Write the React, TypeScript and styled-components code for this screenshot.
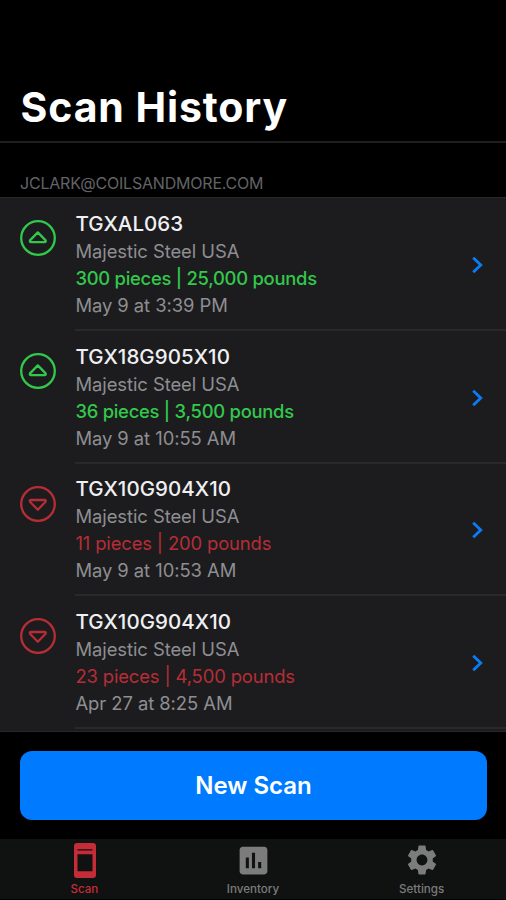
import React from "react";
import styled, { createGlobalStyle } from "styled-components";
import { MdAssessment, MdSettings } from "react-icons/md";

const GlobalStyle = createGlobalStyle`
  * { box-sizing: border-box; }
  body { margin: 0; background: #000; font-family: Inter, Roboto, sans-serif; }
`;

const GREEN = "#32c84c";
const RED = "#b72d36";

const Screen = styled.main`
  display: flex;
  flex-direction: column;
  width: 506px;
  height: 900px;
  overflow: hidden;
  background: #000;
`;

const Header = styled.header`
  flex: none;
  height: 143px;
  padding: 83px 0 0 20.5px;
  border-bottom: 2px solid #1f1f20;
`;

const Title = styled.h1`
  margin: 0;
  color: #fff;
  font-size: 41px;
  line-height: 48px;
  font-weight: 700;
  letter-spacing: 0.9px;
  white-space: nowrap;
`;

const Account = styled.h2`
  flex: none;
  height: 54px;
  margin: 0;
  padding: 30px 0 0 20px;
  color: #636366;
  font-size: 16px;
  line-height: 20px;
  font-weight: 400;
  letter-spacing: -0.2px;
`;

const List = styled.ul`
  flex: none;
  height: 535px;
  margin: 0;
  padding: 0;
  overflow: hidden;
  list-style: none;
  background: #1c1c1e;
  border-top: 1px solid #29292b;
  border-bottom: 1px solid #29292b;
`;

const Row = styled.li`
  display: flex;
  height: 132.75px;
  padding-left: 20px;
`;

const StatusIcon = styled.svg`
  flex: none;
  width: 36px;
  height: 36px;
  margin: 22px 19px 0 0;
  fill: none;
  stroke-linejoin: round;
`;

const Details = styled.div`
  display: flex;
  flex: 1;
  align-items: center;
  justify-content: space-between;
  padding: 2px 22px 0 0;
  border-bottom: 2px solid #29292b;
`;

const Lines = styled.div`
  padding-left: 0.4px;
`;

const Line = styled.p<{ $color?: string; $spacing?: string; $medium?: boolean }>`
  margin: 0;
  color: ${(p) => p.$color ?? "#8e8e92"};
  font-size: 18.4px;
  line-height: 27px;
  font-weight: ${(p) => (p.$medium ? 500 : 400)};
  letter-spacing: ${(p) => p.$spacing ?? "-0.05px"};
  white-space: nowrap;
`;

const Code = styled(Line)`
  color: #f0f0f2;
  font-size: 20.5px;
  line-height: 28px;
  letter-spacing: 0.05px;
`;

const Chevron = styled.svg`
  width: 13px;
  height: 18px;
  margin-top: 1px;
  fill: none;
  stroke: #0a7cf5;
  stroke-width: 2.8;
`;

const Action = styled.div`
  flex: none;
  height: 107px;
  padding: 19px 19px 19px 20px;
`;

const ScanButton = styled.button`
  display: block;
  width: 100%;
  height: 69px;
  padding: 0;
  border: 0;
  border-radius: 12px;
  background: #007aff;
  color: #fff;
  font: 600 24px/69px Inter, sans-serif;
`;

const TabBar = styled.nav`
  display: grid;
  flex: 1;
  grid-template-columns: repeat(3, 1fr);
  background: #101111;
  border-bottom: 1px solid #000;
`;

const Tab = styled.a<{ $active?: boolean }>`
  display: flex;
  flex-direction: column;
  align-items: center;
  color: ${(p) => (p.$active ? "#c42d38" : "#7c7c7c")};
`;

const TabIcon = styled.span`
  display: flex;
  align-items: center;
  justify-content: center;
  height: 42px;
  padding-left: 1px;
`;

const TabLabel = styled.span`
  font-size: 11.6px;
  line-height: 16px;
  font-weight: 500;
`;

type Scan = { code: string; amount: string; time: string; incoming: boolean };

const scans: Scan[] = [
  { code: "TGXAL063", amount: "300 pieces | 25,000 pounds", time: "May 9 at 3:39 PM", incoming: true },
  { code: "TGX18G905X10", amount: "36 pieces | 3,500 pounds", time: "May 9 at 10:55 AM", incoming: true },
  { code: "TGX10G904X10", amount: "11 pieces | 200 pounds", time: "May 9 at 10:53 AM", incoming: false },
  { code: "TGX10G904X10", amount: "23 pieces | 4,500 pounds", time: "Apr 27 at 8:25 AM", incoming: false },
];

function ScanRow({ code, amount, time, incoming }: Scan) {
  const color = incoming ? GREEN : RED;
  return (
    <Row>
      <StatusIcon viewBox="0 0 36 36" stroke={color} strokeWidth="2.3">
        <circle cx="18" cy="18" r="16.8" />
        <path d={incoming ? "M17.8 12.4 25.6 20.4Q26.2 22.1 24.6 22.1H11Q9.4 22.1 10 20.4Z" : "M17.8 23.7 25.6 15.7Q26.2 14 24.6 14H11Q9.4 14 10 15.7Z"} />
      </StatusIcon>
      <Details>
        <Lines>
          <Code $medium>{code}</Code>
          <Line>Majestic Steel USA</Line>
          <Line $color={color} $medium={incoming} $spacing={incoming ? "-0.26px" : "-0.12px"}>{amount}</Line>
          <Line>{time}</Line>
        </Lines>
        <Chevron viewBox="0 0 13 18">
          <path d="M2.2 1.7 9.8 9l-7.6 7.3" />
        </Chevron>
      </Details>
    </Row>
  );
}

export default function App() {
  return (
    <Screen>
      <GlobalStyle />
      <Header>
        <Title>Scan History</Title>
      </Header>
      <Account>JCLARK@COILSANDMORE.COM</Account>
      <List>
        {scans.map((scan) => (
          <ScanRow key={scan.time} {...scan} />
        ))}
      </List>
      <Action>
        <ScanButton>New Scan</ScanButton>
      </Action>
      <TabBar>
        <Tab $active>
          <TabIcon>
            <svg width="22" height="35" viewBox="0 0 22 35" fill="currentColor">
              <path fillRule="evenodd" d="M3 0H19Q22 0 22 3V32Q22 35 19 35H3Q0 35 0 32V3Q0 0 3 0ZM3.5 6.2V7.6H18.5V6.2ZM3.5 11.2V28.2H18.5V11.2Z" />
            </svg>
          </TabIcon>
          <TabLabel>Scan</TabLabel>
        </Tab>
        <Tab>
          <TabIcon><MdAssessment size={37} /></TabIcon>
          <TabLabel>Inventory</TabLabel>
        </Tab>
        <Tab>
          <TabIcon><MdSettings size={36} /></TabIcon>
          <TabLabel>Settings</TabLabel>
        </Tab>
      </TabBar>
    </Screen>
  );
}
